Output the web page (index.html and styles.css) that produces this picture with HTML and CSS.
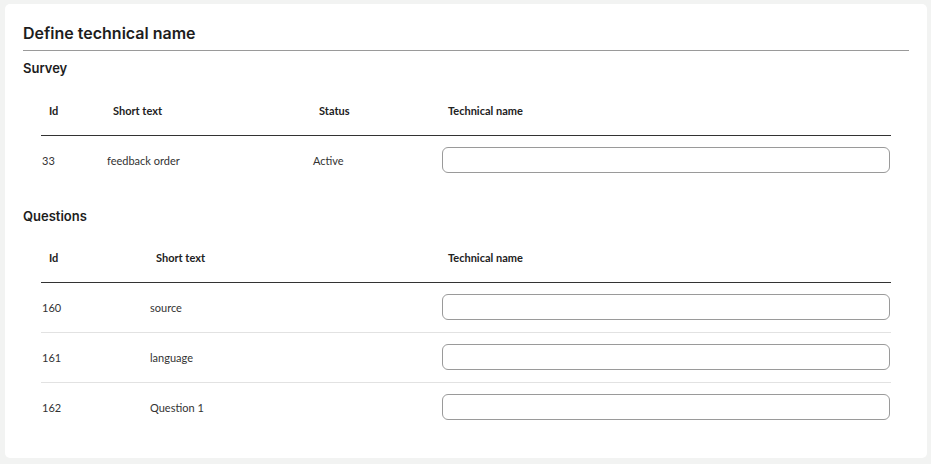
FILE: index.html
```html
<!DOCTYPE html>
<html>
<head>
<meta charset="utf-8">
<link rel="stylesheet" href="styles.css">
</head>
<body>
<div class="card">
  <h1 class="title">Define technical name</h1>

  <h2 class="section">Survey</h2>
  <table class="grid">
    <colgroup><col class="c-id"><col class="c-short"><col class="c-status"><col></colgroup>
    <thead>
      <tr><th>Id</th><th>Short text</th><th>Status</th><th>Technical name</th></tr>
    </thead>
    <tbody>
      <tr><td>33</td><td>feedback order</td><td>Active</td><td class="input-cell"><input class="field" type="text"></td></tr>
    </tbody>
  </table>

  <h2 class="section section-q">Questions</h2>
  <table class="grid">
    <colgroup><col class="c-qid"><col class="c-qshort"><col></colgroup>
    <thead>
      <tr><th>Id</th><th>Short text</th><th>Technical name</th></tr>
    </thead>
    <tbody>
      <tr class="sep"><td>160</td><td>source</td><td class="input-cell"><input class="field" type="text"></td></tr>
      <tr class="sep"><td>161</td><td>language</td><td class="input-cell"><input class="field" type="text"></td></tr>
      <tr><td>162</td><td>Question 1</td><td class="input-cell"><input class="field" type="text"></td></tr>
    </tbody>
  </table>
</div>
</body>
</html>
```

FILE: styles.css
```css
html, body {
  margin: 0;
  background: #f2f3f2;
}
body {
  padding: 4px 4px 0 5px;
  font-family: "Lato", "Open Sans", sans-serif;
  color: #333;
}
.card {
  background: #fff;
  border-radius: 5px;
  padding: 19px 18px 26px 18px;
  height: 454px;
  box-sizing: border-box;
}
.title {
  margin: 0;
  font-family: "Inter", sans-serif;
  font-size: 16px;
  font-weight: 600;
  line-height: 20px;
  color: #1d1d1d;
  padding-bottom: 7px;
  border-bottom: 1px solid #9a9a9a;
}
.section {
  margin: 8px 0 10px 0;
  font-family: "Inter", sans-serif;
  font-size: 13px;
  font-weight: 600;
  line-height: 18px;
  color: #1d1d1d;
}
.section-q {
  margin-top: 22px;
  margin-bottom: 9px;
}
.grid {
  width: 850px;
  margin: 0 18px;
  border-collapse: collapse;
  table-layout: fixed;
  font-size: 11px;
}
.c-id { width: 65px; }
.c-short { width: 206px; }
.c-status { width: 129px; }
.c-qid { width: 108px; }
.c-qshort { width: 292px; }
.grid th {
  text-align: left;
  font-weight: 700;
  color: #222;
  padding: 16px 0 16px 7px;
  line-height: 16px;
  border-bottom: 1px solid #333;
}
.grid th:first-child {
  padding-left: 8px;
}
.grid td {
  padding: 12px 1px 11px 1px;
  line-height: 16px;
  vertical-align: middle;
  color: #333;
}
.grid td.input-cell {
  padding: 11px 1px 12px 1px;
}
.grid tr.sep td {
  border-bottom: 1px solid #e2e2e2;
}
.field {
  display: block;
  width: 100%;
  height: 26px;
  box-sizing: border-box;
  border: 1px solid #9a9a9a;
  border-radius: 6px;
  background: #fff;
  margin: 0;
  padding: 0 8px;
  font: inherit;
}
```
